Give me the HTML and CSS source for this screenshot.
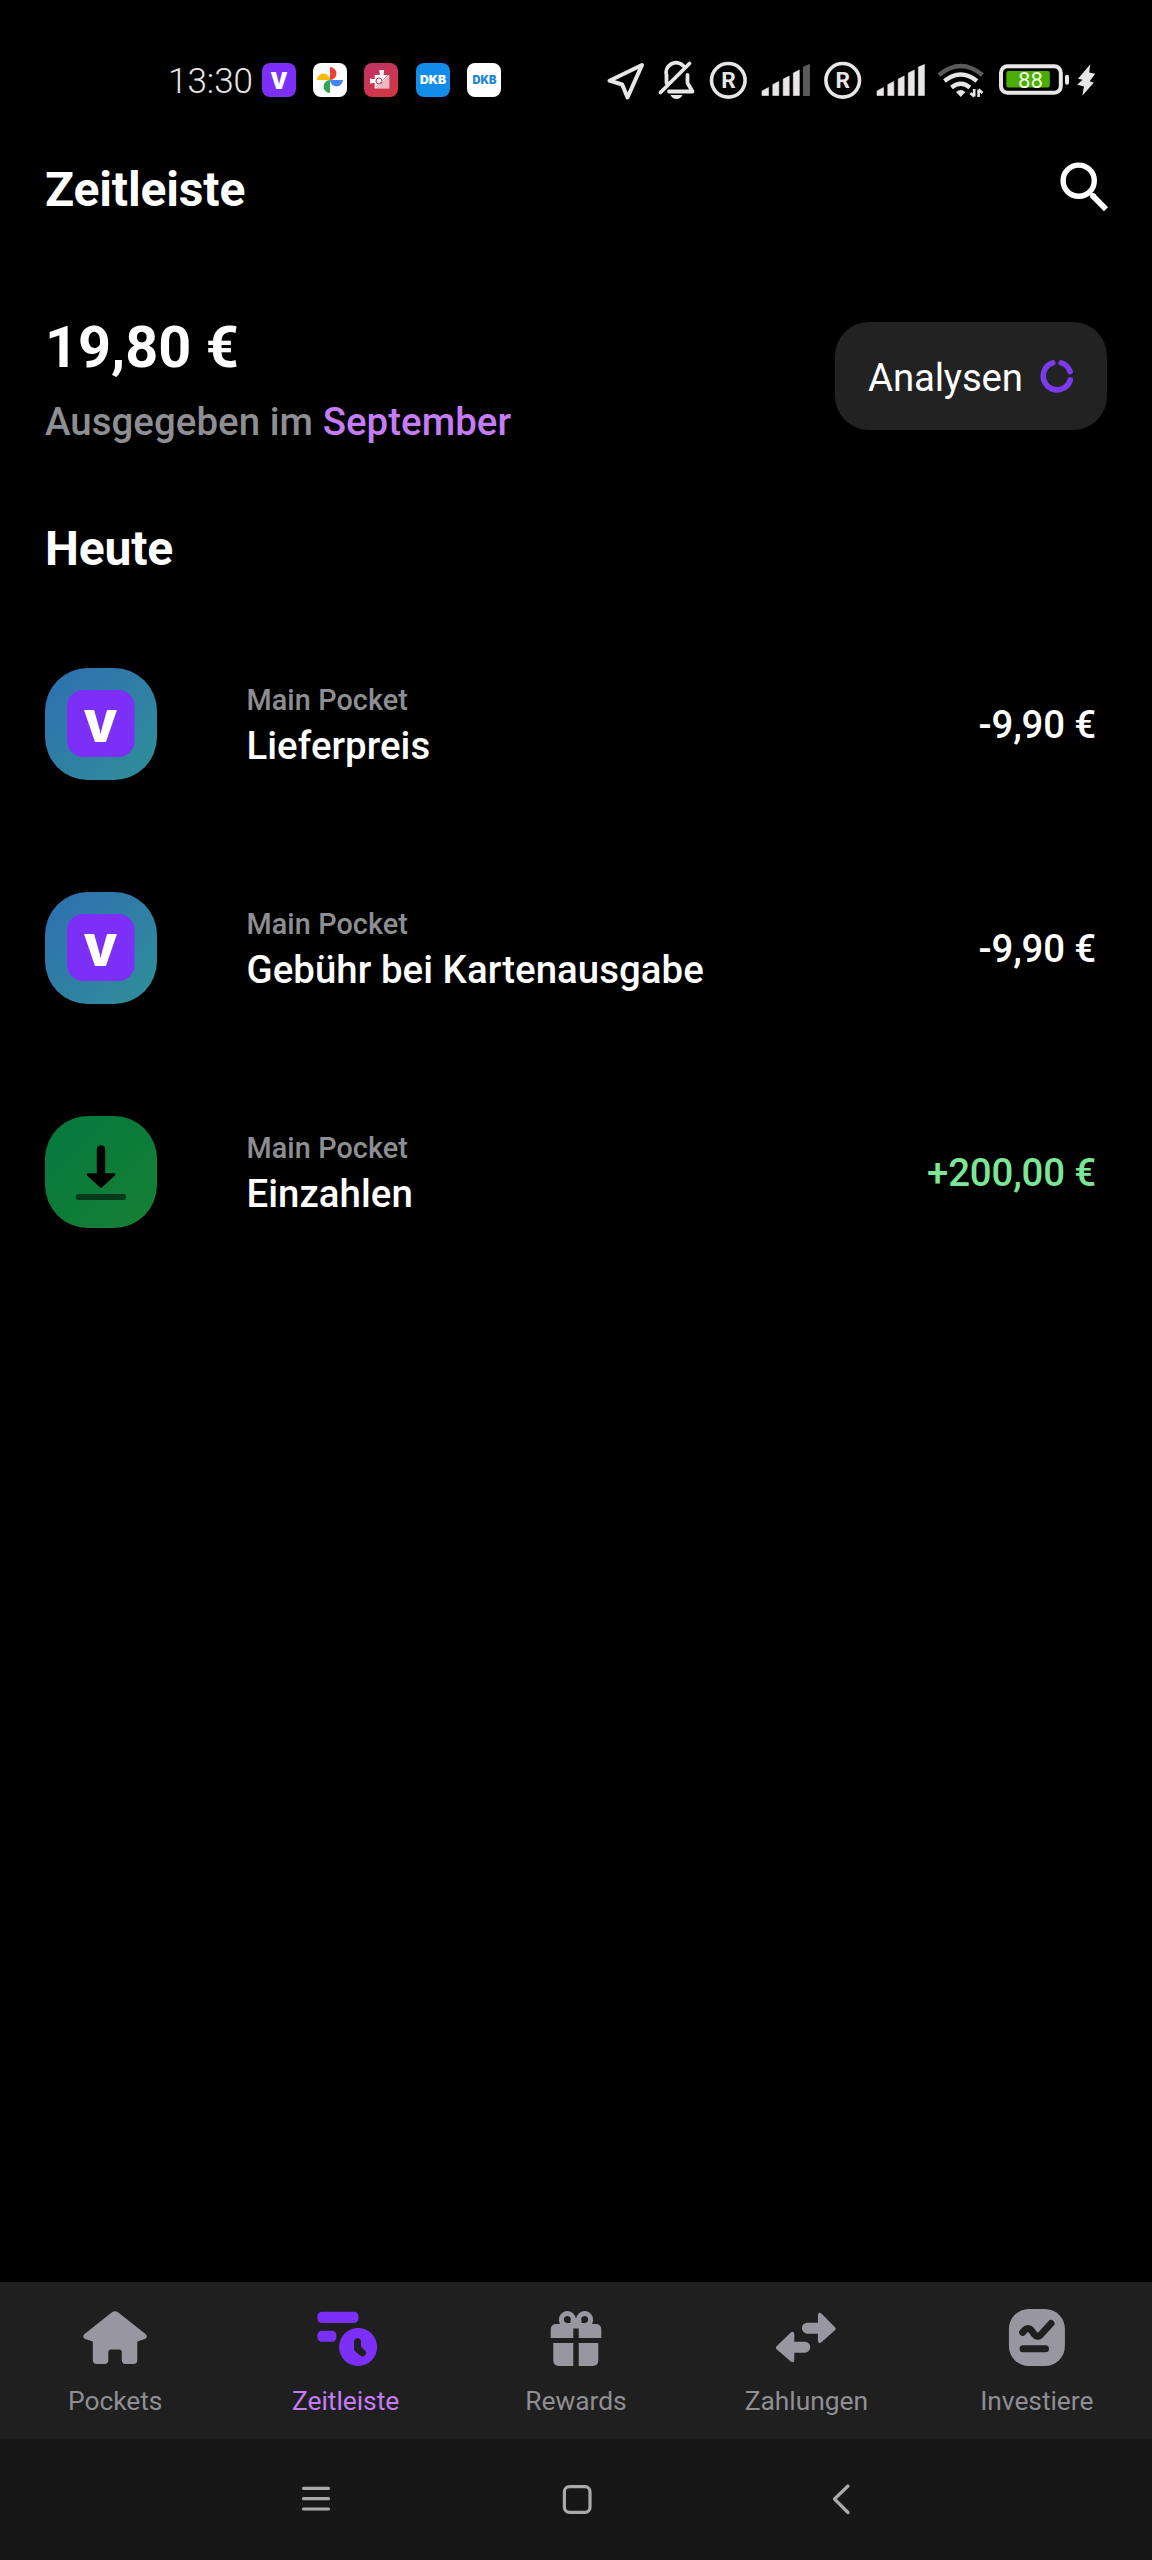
FILE: index.html
```html
<!DOCTYPE html>
<html lang="de">
<head>
<meta charset="utf-8">
<title>Zeitleiste</title>
<link rel="stylesheet" href="styles.css">
</head>
<body>
<div class="screen">
  <div class="status-bar">
    <span class="clock">13:30</span>
    <div class="notifications">
      <svg class="app" viewBox="0 0 34 34"><rect width="34" height="34" rx="8" fill="#7c30f7"/><text class="logo-v" x="8.5" y="26.4" font-size="31" textLength="17" lengthAdjust="spacingAndGlyphs">v</text></svg>
      <svg class="app" viewBox="0 0 34 34"><rect width="34" height="34" rx="8" fill="#fff"/><path d="M17 17V4a6.500 6.500 0 0 1 0 13z" fill="#e8423a"/><path d="M17 17h13a6.500 6.500 0 0 1-13 0z" fill="#4486f4"/><path d="M17 17v13a6.500 6.500 0 0 1 0-13z" fill="#33a452"/><path d="M17 17H4a6.500 6.500 0 0 1 13 0z" fill="#f9b908"/></svg>
      <svg class="app" viewBox="0 0 34 34"><defs><linearGradient id="rd" x1="0" y1="0" x2=".6" y2="1"><stop stop-color="#bd3468"/><stop offset="1" stop-color="#d23645"/></linearGradient></defs><rect width="34" height="34" rx="8" fill="url(#rd)"/><path d="M10.700 12h5v-2l-.5-3h5l-.5 3v2h5.600v13.500H10.700V20H9l-3 .5v-5l3 .5h1.700z" fill="#fff" opacity=".95"/><circle cx="15" cy="18" r="3" fill="none" stroke="#c8355a" stroke-width="1"/><path d="M12 24l12-12" stroke="#d9808f" stroke-width="1"/><path d="M25.300 12v13.500H12z" fill="#d3475a" opacity=".35"/></svg>
      <svg class="app" viewBox="0 0 34 34"><rect width="34" height="34" rx="8" fill="#148dea"/><text class="dkb" x="4" y="21.300" textLength="26" lengthAdjust="spacingAndGlyphs" fill="#fff">DKB</text></svg>
      <svg class="app" viewBox="0 0 34 34"><rect width="34" height="34" rx="8" fill="#fff"/><text class="dkb" x="5.500" y="21.300" textLength="24" lengthAdjust="spacingAndGlyphs" fill="#1f88d6">DKB</text></svg>
    </div>
    <div class="indicators">
      <svg width="40" height="40" viewBox="606 60 40 40"><path d="M642 65L609.500 80.700l12.700 3.800 5.300 13z" class="line" stroke-width="4"/></svg>
      <svg width="40" height="40" viewBox="656 60 40 40"><path d="M660.500 92.500L689.500 63.500M666.500 83v-7.500a10 10 0 0 1 17-9.500M687.500 75v8l5 8.500H669" class="line" stroke-width="3.800"/><path d="M670.500 95h12q-2 4-6 4t-6-4z" class="solid"/></svg>
      <svg width="44" height="40" viewBox="706 60 44 40"><circle cx="728.300" cy="80.300" r="16.800" class="line" stroke-width="3.600"/><text class="reg" x="721.200" y="88" textLength="14.500" lengthAdjust="spacingAndGlyphs">R</text></svg>
      <svg width="51" height="40" viewBox="760 60 51 40"><g class="solid"><path d="M762 95.500v-4.500l6.500-3.500v8zM772.800 95.500V84.500l6-3v14zM783.200 95.500V79l6-3v19.500zM793.300 95.500V73l6-3v25.500z" class="bar"/><path d="M803.500 95.500V67l6-2.500v31z" fill="#5a5a5a" stroke="#5a5a5a"/></g></svg>
      <svg width="44" height="40" viewBox="821 60 44 40"><circle cx="842.700" cy="80.300" r="16.800" class="line" stroke-width="3.600"/><text class="reg" x="835.600" y="88" textLength="14.500" lengthAdjust="spacingAndGlyphs">R</text></svg>
      <svg width="51" height="40" viewBox="874.300 60 51 40"><path d="M876.300 95.500v-4.500l6.500-3.500v8zM887.100 95.500V84.500l6-3v14zM897.500 95.500V79l6-3v19.500zM907.600 95.500V73l6-3v25.500zM917.700 95.500V67l6-2.500v31z" class="solid bar"/></svg>
      <svg width="50" height="40" viewBox="936 60 50 40"><path d="M939 75q21.700-18 43.400 0" fill="none" stroke="#5a5a5a" stroke-width="4.500"/><path d="M944.500 81q16.200-13 32.400 0M951.500 87.500q9.200-7.500 18.400 0" fill="none" stroke="#e9e6e7" stroke-width="4.300"/><path d="M956 92q4.700-4 9.400 0l-4.700 5z" class="solid"/><path d="M974.200 89v7.500M970.500 93l3.700 3.500M978.600 97v-7.500M982.500 93l-3.900-3.500" fill="none" stroke="#e9e6e7" stroke-width="2.600"/></svg>
      <svg width="102" height="40" viewBox="996 60 102 40"><rect x="1001" y="66.300" width="59.800" height="26.500" rx="6.500" class="line" stroke-width="4"/><rect x="1006.300" y="71" width="43.500" height="16.500" rx="2" fill="#4bac08"/><text class="charge" x="1018" y="87.500" textLength="25" lengthAdjust="spacingAndGlyphs">88</text><rect x="1065" y="74.700" width="4" height="10" rx="2" class="solid"/><path d="M1090.300 64.300L1078 78.700l4.500 1-5.300 5 6.800 1.800-1.700 9.200 11.400-13-4-1.500 5.500-7.500-6-1.200z" class="solid"/></svg>
    </div>
  </div>

  <header class="header">
    <h1 class="title">Zeitleiste</h1>
    <svg class="search" viewBox="0 0 50 50"><circle cx="19.700" cy="19.700" r="15.600" fill="none" stroke="#fff" stroke-width="5.400"/><path d="M33.500 34.500L47 48.300" stroke="#fff" stroke-width="5.800"/><circle cx="34" cy="35" r="2.900" fill="#fff"/></svg>
  </header>

  <section class="summary">
    <div class="spent">
      <div class="total">19,80 €</div>
      <div class="period">Ausgegeben im <span class="month">September</span></div>
    </div>
    <div class="analyse"><span class="analyse-label">Analysen</span>
      <svg class="ring" viewBox="-17 -17 34 34"><path d="M4.300 -13.100A13.800 13.800 0 0 1 13.100 -4.300M13.300 3.900A13.800 13.800 0 1 1 -4.300 -13.100" fill="none" stroke="#7c3aed" stroke-width="5.600" stroke-linecap="round"/></svg>
    </div>
  </section>

  <h2 class="day">Heute</h2>
  <ul class="list">
    <li class="row">
      <div class="avatar fee"><svg viewBox="0 0 68 68"><rect width="67.500" height="67" rx="16" fill="#7c30f7"/><text class="logo-v" x="16.500" y="52" font-size="59" textLength="34" lengthAdjust="spacingAndGlyphs">v</text></svg></div>
      <div class="info"><div class="pocket">Main Pocket</div><div class="name">Lieferpreis</div></div>
      <div class="amount">-9,90 €</div>
    </li>
    <li class="row">
      <div class="avatar fee"><svg viewBox="0 0 68 68"><rect width="67.500" height="67" rx="16" fill="#7c30f7"/><text class="logo-v" x="16.500" y="52" font-size="59" textLength="34" lengthAdjust="spacingAndGlyphs">v</text></svg></div>
      <div class="info"><div class="pocket">Main Pocket</div><div class="name">Gebühr bei Kartenausgabe</div></div>
      <div class="amount">-9,90 €</div>
    </li>
    <li class="row">
      <div class="avatar deposit"><svg viewBox="0 0 68 68"><path d="M34 11.500V42" stroke="#000" stroke-width="8.400" stroke-linecap="round"/><path d="M21 36.500h26L34 48.500z" stroke="#000" stroke-width="2.500" stroke-linejoin="round"/><rect x="8.700" y="56" width="50.500" height="6" rx="3" fill="#053a1b"/></svg></div>
      <div class="info"><div class="pocket">Main Pocket</div><div class="name">Einzahlen</div></div>
      <div class="amount credit">+200,00 €</div>
    </li>
  </ul>

  <nav class="tabs">
    <div class="tab"><svg viewBox="0 0 64 60"><path d="M29 4.300q3-2.300 6 0L62.500 26q2.500 2.500 0 4.800L54.300 33.500V52q0 4-4 4H42.500q-3.700 0-3.700-3.700V44.500q0-3-3-3h-7.500q-3 0-3 3V52.300q0 3.700-3.700 3.700H14q-4.200 0-4.200-4V33.500L1.500 30.800q-2.500-2.300 0-4.800z"/></svg><span class="label">Pockets</span></div>
    <div class="tab active"><svg viewBox="0 0 64 60"><rect x="3.400" y="3.700" width="41" height="11.300" rx="4.500"/><rect x="3.400" y="22.700" width="19" height="11" rx="4.500"/><circle cx="44.100" cy="39" r="19"/><path d="M43.500 33.700v6.800l5 4.300" class="cut"/></svg><span class="label">Zeitleiste</span></div>
    <div class="tab"><svg viewBox="0 0 64 60"><g class="bow"><path d="M30.500 17.500H24a6 6 0 1 1 5.300-6.500z"/><path d="M33.500 17.500H40a6 6 0 1 0-5.300-6.500z"/><path d="M29 13h6v5h-6z"/></g><path d="M12.500 16h39q5.800 0 5.800 5.800V30H34.700V18.700h-5.400V30H6.700v-8.200q0-5.800 5.800-5.800zM9.300 35h20v23H15q-5.700 0-5.700-5.700zM34.700 35h19.600v17.300q0 5.700-5.700 5.700H34.700z"/></svg><span class="label">Rewards</span></div>
    <div class="tab"><svg viewBox="0 0 64 60"><path d="M33.400 14.700h10.500V8q0-5 3.800-2.300L61 19.300q1.700 1.500 0 3L47.700 34q-3.800 2.700-3.800-2v-6.300H33.400a5.500 5.500 0 0 1 0-11zM30.800 33.700H20.300V27q0-5-3.800-2.300L2.600 38.300q-1.700 1.500 0 3l13.900 12q3.800 2.700 3.800-2v-6.600h10.500a5.500 5.500 0 0 0 0-11z"/></svg><span class="label">Zahlungen</span></div>
    <div class="tab"><svg viewBox="0 0 64 60"><rect x="3.900" y="1" width="56" height="57" rx="20"/><path d="M17.700 24.300l1.800-2q3.500-3.500 7 .2l3 4q3 3.500 6 .5L46 15.500M18 40.700H40.500" class="cut"/></svg><span class="label">Investiere</span></div>
  </nav>
  <div class="system-bar">
    <svg viewBox="0 0 32 32"><path d="M3.500 5.300h25M3.500 15.700h25M3.500 26h25"/></svg>
    <svg viewBox="0 0 32 32"><rect x="3.400" y="3.700" width="25.600" height="25.600" rx="5"/></svg>
    <svg viewBox="0 0 32 32"><path d="M23 3L9.500 16 23 29.500"/></svg>
  </div>
</div>
</body>
</html>
```
FILE: styles.css
```css
* { box-sizing: border-box; }
body { margin: 0; background: #000; font-family: Roboto, "Noto Sans", sans-serif; color: #fff; }
svg { display: block; flex: none; overflow: visible; }
.screen { width: 1152px; height: 2560px; display: flex; flex-direction: column; background: #000; overflow: hidden; }

.status-bar { height: 160px; display: flex; align-items: center; padding-left: 168px; }
.clock { width: 94px; padding-top: 3px; font-size: 35px; font-weight: 350; line-height: 40px; color: #e6e6e6; }
.notifications { display: flex; gap: 17.2px; }
.app { width: 34px; height: 34px; }
.indicators { display: flex; gap: 10px; margin-left: 105.2px; }
.line { fill: none; stroke: #e9e6e7; stroke-linejoin: round; stroke-linecap: round; }
.solid { fill: #e9e6e7; }
.bar { stroke: #e9e6e7; stroke-width: .6; stroke-linejoin: round; }
.logo-v { font-family: Inter, sans-serif; font-weight: 800; fill: #fff; }
.dkb { font-family: Inter, sans-serif; font-weight: 900; font-size: 11.5px; }
.reg { font-family: Roboto, sans-serif; font-weight: 700; font-size: 22px; fill: #e9e6e7; }
.charge { font-family: Roboto, sans-serif; font-weight: 400; font-size: 22px; fill: #efffdc; }

.header { height: 100px; padding: 0 43px 0 45px; display: flex; justify-content: space-between; }
.title, .day { margin: 0; font-size: 48px; line-height: 60px; font-weight: 700; letter-spacing: -.15px; }
.search { width: 50px; height: 50px; margin-top: 1px; }

.summary { height: 250px; padding: 54px 45px 0; display: flex; justify-content: space-between; }
.total { font-size: 57.6px; line-height: 68px; font-weight: 700; }
.period { margin-top: 16px; font-size: 38.4px; line-height: 48px; font-weight: 500; letter-spacing: .06px; color: #8e8e93; }
.month { color: #c67cf7; }
.analyse { width: 272px; height: 108px; margin-top: 8px; padding: 0 33px; border-radius: 34px; background: #222; display: flex; align-items: center; justify-content: space-between; }
.analyse-label { padding-top: 4px; font-size: 38.4px; line-height: 48px; letter-spacing: -.15px; }
.ring { width: 34px; height: 34px; }

.day { padding-left: 45px; margin-top: 9px; }
.list { list-style: none; margin: 89px 0 0; padding: 0 56px 0 45px; display: flex; flex-direction: column; gap: 112px; }
.row { height: 112px; display: flex; align-items: center; }
.avatar { width: 112px; height: 112px; border-radius: 43px; display: flex; align-items: center; justify-content: center; }
.avatar svg { width: 68px; height: 68px; }
.fee { background: linear-gradient(135deg, #2f6fb2, #2f8f98); }
.deposit { background: linear-gradient(135deg, #04783f, #178034); }
.info { flex: 1; padding: 3px 0 0 89.5px; }
.pocket { font-size: 28.8px; line-height: 40px; font-weight: 500; letter-spacing: .08px; color: #8e8e93; }
.name { font-size: 38.4px; line-height: 52px; font-weight: 500; letter-spacing: .05px; }
.amount { padding-top: 2px; font-size: 38.4px; line-height: 52px; font-weight: 500; letter-spacing: -.15px; }
.credit { color: #7be695; }

.tabs { margin-top: auto; height: 157px; background: #1f1f1f; display: grid; grid-template-columns: repeat(5, 1fr); }
.tab { display: flex; flex-direction: column; align-items: center; padding-top: 26px; }
.tab svg { width: 64px; height: 60px; fill: #9897a1; }
.label { margin-top: 15px; font-size: 26.4px; line-height: 36px; letter-spacing: -.05px; color: #8e8e93; }
.tab.active svg { fill: #7c30f7; }
.active .label { color: #c67cf7; }
.tab .cut { fill: none; stroke: #1f1f1f; stroke-width: 7; stroke-linecap: round; stroke-linejoin: round; }
.tab .bow path { fill: none; stroke: #9897a1; stroke-width: 5; stroke-linejoin: round; }

.system-bar { height: 121px; background: #171717; display: grid; grid-template-columns: 261px 264px 32px; padding: 44px 0 0 300px; }
.system-bar svg { width: 32px; height: 32px; fill: none; stroke: #aaa; stroke-width: 3.2; stroke-linecap: round; stroke-linejoin: round; }
```
